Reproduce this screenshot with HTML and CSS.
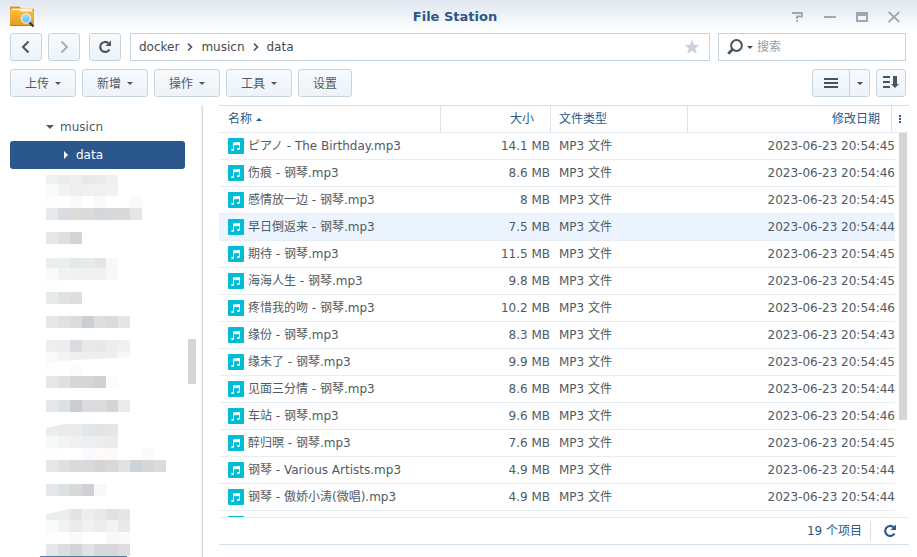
FILE: index.html
```html
<!DOCTYPE html>
<html lang="zh-CN">
<head>
<meta charset="utf-8">
<meta name="viewport" content="width=device-width, initial-scale=1">
<title>File Station</title>
<link rel="stylesheet" href="styles.css">
</head>
<body>
<div class="window">
  <header class="titlebar">
    <svg class="app-icon" viewBox="0 0 26 22" aria-hidden="true">
      <defs>
        <linearGradient id="folder" x1="0" y1="0" x2="0" y2="1"><stop offset="0" stop-color="#fdbd3c"/><stop offset="1" stop-color="#e39a1e"/></linearGradient>
        <linearGradient id="lens" x1="0" y1="0" x2="0" y2="1"><stop offset="0" stop-color="#a5e4fb"/><stop offset="1" stop-color="#5cc3f2"/></linearGradient>
      </defs>
      <path d="M0 19V1.500Q0 .5 1 .5H9L12 2.500H23Q24 2.500 24 3.500V19Z" fill="#dc9320"/>
      <rect x="1.500" y="2.500" width="21" height="4" fill="#fff4dc"/>
      <path d="M0 4H9L11 5.500H24V19Q24 20 23 20H1Q0 20 0 19Z" fill="url(#folder)"/>
      <path d="M0 19.500H24" stroke="#c87f14"/>
      <path d="M19 16L23.500 20.500" stroke="#39434d" stroke-width="2.400"/>
      <circle cx="16" cy="12.500" r="4.600" fill="url(#lens)" stroke="#e9edf0" stroke-width="1.300"/>
    </svg>
    <h1 class="title">File Station</h1>
    <div class="controls">
      <button class="control" aria-label="帮助"><svg viewBox="0 0 12 12"><path d="M0 2H10V5.500H5V8M5 9V11" fill="none" stroke="currentColor" stroke-width="1.800"/></svg></button>
      <button class="control" aria-label="最小化"><svg viewBox="0 0 12 12"><path d="M0 6H12" stroke="currentColor" stroke-width="2"/></svg></button>
      <button class="control" aria-label="最大化"><svg viewBox="0 0 12 12"><path d="M0 1H12V11H0ZM2 5V9H10V5Z" fill="currentColor" fill-rule="evenodd"/></svg></button>
      <button class="control" aria-label="关闭"><svg viewBox="0 0 12 12"><path d="M.5 1L11.500 11M11.500 1L.5 11" stroke="currentColor" stroke-width="1.800"/></svg></button>
    </div>
  </header>

  <div class="bar nav">
    <div class="history">
      <button class="btn square" aria-label="后退"><svg class="i14" viewBox="0 0 14 14"><path d="M9.500 1.500L4 7L9.500 12.500" fill="none" stroke="#4a545e" stroke-width="2"/></svg></button>
      <button class="btn square" aria-label="前进"><svg class="i14" viewBox="0 0 14 14"><path d="M4.500 1.500L10 7L4.500 12.500" fill="none" stroke="#a3abb3" stroke-width="1.800"/></svg></button>
    </div>
    <button class="btn square" aria-label="刷新"><svg class="i14" viewBox="0 0 14 14"><path d="M11.500 9.500A5 5 0 1 1 10.500 3.200" fill="none" stroke="#4a545e" stroke-width="2.200"/><path d="M13 .5V6H7.500Z" fill="#4a545e"/></svg></button>
    <div class="fields">
      <nav class="path" aria-label="路径">
        <a href="#docker">docker</a>
        <svg class="sep" viewBox="0 0 8 10"><path d="M2 1.500L5.500 5L2 8.500" fill="none" stroke="#4a545e" stroke-width="1.600"/></svg>
        <a href="#musicn">musicn</a>
        <svg class="sep" viewBox="0 0 8 10"><path d="M2 1.500L5.500 5L2 8.500" fill="none" stroke="#4a545e" stroke-width="1.600"/></svg>
        <a href="#data">data</a>
        <button class="star" aria-label="收藏"><svg viewBox="0 0 16 16"><path d="M8 .5L10 6H15.500L11.200 9.500L12.800 15L8 11.700L3.200 15L4.800 9.500L.5 6H6Z" fill="#c6d1dd"/></svg></button>
      </nav>
      <label class="search">
        <svg class="glass" viewBox="0 0 16 16"><circle cx="9.500" cy="6.500" r="5.400" fill="none" stroke="#4a545e" stroke-width="2"/><path d="M5.700 10.300L1.200 14.800" stroke="#4a545e" stroke-width="2.800"/></svg>
        <svg class="caret" viewBox="0 0 6 3"><path d="M0 0H6L3 3Z" fill="#414b55"/></svg>
        <input type="text" placeholder="搜索" aria-label="搜索">
      </label>
    </div>
  </div>

  <div class="bar tools">
    <button class="btn menu">上传<svg class="caret" viewBox="0 0 6 3"><path d="M0 0H6L3 3Z" fill="currentColor"/></svg></button>
    <button class="btn menu">新增<svg class="caret" viewBox="0 0 6 3"><path d="M0 0H6L3 3Z" fill="currentColor"/></svg></button>
    <button class="btn menu">操作<svg class="caret" viewBox="0 0 6 3"><path d="M0 0H6L3 3Z" fill="currentColor"/></svg></button>
    <button class="btn menu">工具<svg class="caret" viewBox="0 0 6 3"><path d="M0 0H6L3 3Z" fill="currentColor"/></svg></button>
    <button class="btn plain">设置</button>
    <div class="split">
      <button class="btn view" aria-label="列表视图"><svg class="i14" viewBox="0 0 14 14"><path d="M0 3H14M0 7H14M0 11H14" stroke="#4a545e" stroke-width="2"/></svg></button>
      <button class="btn more" aria-label="视图选项"><svg class="caret" viewBox="0 0 6 3"><path d="M0 0H6L3 3Z" fill="#414b55"/></svg></button>
    </div>
    <button class="btn sort" aria-label="排序"><svg viewBox="0 0 16 14"><path d="M0 1H7M0 6H7M0 11H7" stroke="#4a545e" stroke-width="2"/><path d="M10 0H14V8H16L12 12L8 8H10Z" fill="#4a545e"/></svg></button>
  </div>

  <div class="content">
    <aside class="sidebar">
      <div class="tree">
        <a class="node" href="#musicn"><svg viewBox="0 0 8 8"><path d="M0 2H8L4 6Z" fill="currentColor"/></svg>musicn</a>
        <a class="node selected" href="#data"><svg viewBox="0 0 8 8"><path d="M2 0V8L6 4Z" fill="currentColor"/></svg>data</a>
        <svg class="mosaic" id="mosaic" viewBox="0 0 175 388" width="175" height="388" aria-hidden="true"></svg>
      </div>
      <div class="thumb side-thumb"></div>
    </aside>

    <main class="files">
      <div class="list">
        <table>
          <colgroup><col class="c-name"><col class="c-size"><col class="c-type"><col><col class="c-edge"><col class="c-menu"></colgroup>
          <thead>
            <tr>
              <th>名称<svg class="up" viewBox="0 0 6 3"><path d="M0 3H6L3 0Z" fill="currentColor"/></svg></th>
              <th class="num">大小</th>
              <th>文件类型</th>
              <th class="date">修改日期</th>
              <th class="options" colspan="2"><svg viewBox="0 0 2 8"><path d="M0 0H2V2H0ZM0 3H2V5H0ZM0 6H2V8H0Z" fill="currentColor"/></svg></th>
            </tr>
          </thead>
          <tbody id="rows"></tbody>
        </table>
        <div class="thumb list-thumb"></div>
      </div>
      <footer class="status">
        <span>19 个项目</span>
        <button class="reload" aria-label="刷新"><svg class="i14" viewBox="0 0 14 14"><path d="M11.500 9.500A5 5 0 1 1 10.500 3.200" fill="none" stroke="#2a588c" stroke-width="2.200"/><path d="M13 .5V6H7.500Z" fill="#2a588c"/></svg></button>
      </footer>
    </main>
  </div>
</div>
<script src="app.js"></script>
</body>
</html>
```
FILE: styles.css
```css
* { box-sizing: border-box; }

body {
  margin: 0;
  background: #fff;
  color: #505a64;
  font: 12px/16px "DejaVu Sans", "Noto Sans CJK SC", sans-serif;
}

button, input {
  margin: 0;
  padding: 0;
  border: 0;
  background: none;
  color: inherit;
  font: inherit;
}

a { color: inherit; text-decoration: none; }
svg { display: block; flex: none; }

.window {
  display: flex;
  flex-direction: column;
  height: 100vh;
  overflow: hidden;
  background: linear-gradient(#e0e7f0, #fff 32px);
}

.titlebar {
  display: grid;
  grid-template-columns: 1fr auto 1fr;
  align-items: center;
  height: 33px;
  padding: 0 17px 0 10px;
  flex: none;
}
.app-icon { width: 26px; height: 22px; }
.title { margin: 0; font-size: 13px; color: #2a588c; }
.controls { display: flex; justify-content: flex-end; gap: 20px; }
.control { color: #a0a7ae; }
.control svg { width: 12px; height: 12px; }

.bar { display: flex; flex: none; height: 28px; padding: 0 11px 0 10px; }
.nav { gap: 9px; }
.history { display: flex; gap: 6px; }
.fields { display: flex; flex: 1; gap: 8px; min-width: 0; }
.tools { gap: 6px; margin-top: 8px; }

.btn {
  display: flex;
  align-items: center;
  justify-content: center;
  border: 1px solid #c6d4e0;
  border-radius: 3px;
  background: linear-gradient(#f7fafd, #edf3f8);
}
.square { width: 32px; }
.i14 { width: 14px; height: 14px; }
.menu { width: 66px; gap: 6px; padding-top: 1px; }
.plain { width: 54px; padding-top: 1px; }
.caret { width: 6px; height: 3px; }
.split { display: flex; margin-left: auto; }
.view { width: 38px; padding-right: 1px; border-radius: 3px 0 0 3px; }
.more { width: 21px; margin-left: -1px; border-radius: 0 3px 3px 0; }
.sort { width: 30px; }
.sort svg { width: 16px; height: 14px; }

.path {
  display: flex;
  flex: 1;
  align-items: center;
  gap: 7px;
  padding: 0 9px 0 8px;
  border: 1px solid #c6d4e0;
  background: #fff;
  color: #414b55;
}
.sep { width: 8px; height: 10px; }
.star { margin-left: auto; }
.star svg { width: 16px; height: 16px; }

.search {
  display: flex;
  align-items: center;
  width: 188px;
  gap: 4px;
  padding: 0 8px;
  border: 1px solid #c6d4e0;
  background: #fff;
}
.glass { width: 16px; height: 16px; }
.search input { flex: 1; min-width: 0; outline: 0; }
.search input::placeholder { color: #96a0aa; opacity: 1; }

.content { display: flex; flex: 1; min-height: 0; margin-top: 8px; }

.sidebar {
  position: relative;
  flex: none;
  width: 203px;
  overflow: hidden;
  border-right: 1px solid #d9dcdf;
  box-shadow: inset -2px 0 1px -1px #eceeef;
}
.tree { padding: 8px 17px 0 10px; }
.node {
  display: flex;
  align-items: center;
  gap: 6px;
  height: 28px;
  padding-left: 36px;
}
.selected {
  padding-left: 52px;
  border-radius: 3px;
  background: #2a588c;
  color: #fff;
}
.node svg { width: 8px; height: 8px; }

.thumb { position: absolute; width: 8px; background: #d3d5d7; }
.side-thumb { right: 6px; top: 60%; height: 45px; margin-top: -37px; }
.list-thumb { right: 2px; top: 27px; height: 287px; }

.files { flex: 1; min-width: 0; margin: 0 8px 12px 16px; display: flex; flex-direction: column; }
.list {
  position: relative;
  flex: 1;
  min-height: 0;
  overflow: hidden;
  border-top: 1px solid #d3dfea;
}
table { width: 100%; table-layout: fixed; border-collapse: separate; border-spacing: 0; }
.c-name { width: 222px; }
.c-size { width: 110px; }
.c-type { width: 137px; }
.c-edge { width: 3px; }
.c-menu { width: 14px; }

th, td {
  height: 27px;
  padding: 0 8px;
  border-bottom: 1px solid #e6edf3;
  text-align: left;
  white-space: nowrap;
}
th {
  border-right: 1px solid #d9e4ee;
  color: #2a588c;
  font-weight: normal;
}
th:first-child, td:first-child { padding-left: 9px; }
th.options { padding: 0 7px; border-right: 0; }
th.num { padding-right: 16px; }
th.date { padding-right: 11px; }
.num, .date { text-align: right; }
td.num { padding-right: 1px; }
td.date { padding-right: 0; }
td.rest { border: 0; }
.up { display: inline-block; width: 6px; height: 3px; margin-left: 4px; vertical-align: middle; }
.options svg { width: 2px; height: 8px; }
.name { display: flex; align-items: center; gap: 4px; }
.name svg { width: 16px; height: 16px; }
.hover td:not(.rest) { background: #ecf5ff; }

.status {
  display: flex;
  align-items: center;
  justify-content: flex-end;
  flex: none;
  height: 28px;
  gap: 8px;
  padding-right: 12px;
  border-top: 1px solid #e6ebef;
  border-bottom: 1px solid #d3dfea;
  color: #2a588c;
}
.reload { height: 20px; padding-left: 12px; border-left: 1px solid #d3dfea; }
```
FILE: app.js
```js
const files = [
  ["ピアノ - The Birthday", "14.1", "45"],
  ["伤痕 - 钢琴", "8.6", "46"],
  ["感情放一边 - 钢琴", "8", "45"],
  ["早日倒返来 - 钢琴", "7.5", "44"],
  ["期待 - 钢琴", "11.5", "45"],
  ["海海人生 - 钢琴", "9.8", "45"],
  ["疼惜我的吻 - 钢琴", "10.2", "46"],
  ["缘份 - 钢琴", "8.3", "43"],
  ["缘末了 - 钢琴", "9.9", "45"],
  ["见面三分情 - 钢琴", "8.6", "44"],
  ["车站 - 钢琴", "9.6", "46"],
  ["醉归暝 - 钢琴", "7.6", "45"],
  ["钢琴 - Various Artists", "4.9", "44"],
  ["钢琴 - 傲娇小涛(微唱)", "4.9", "44"],
  null
];

const icon = '<svg viewBox="0 0 16 16"><rect width="16" height="16" rx="1" fill="#00bcd4"/>' +
  '<path d="M5 4.500L12 4V11H11V7L6 7.300V12H5Z" fill="#fff"/>' +
  '<ellipse cx="4.600" cy="12" rx="1.500" ry="1.100" fill="#fff"/><ellipse cx="10.400" cy="11" rx="1.500" ry="1.100" fill="#fff"/></svg>';

document.getElementById("rows").innerHTML = files.map((f, i) => {
  const cells = f
    ? [f[0] + ".mp3", f[1] + " MB", "MP3 文件", "2023-06-23 20:54:" + f[2]]
    : ["", "", "", ""];
  return `<tr class="${i === 3 ? "hover" : ""}"><td><div class="name">${icon}<span>${cells[0]}</span></div></td>` +
    `<td class="num">${cells[1]}</td><td>${cells[2]}</td><td class="date" colspan="2">${cells[3]}</td><td class="rest"></td></tr>`;
}).join("");

// Obscured folder names: [top, height, one colour per 12px cell]
const mosaic = [
  [6, 9, "eef0f2 ebecee f0efee e8e8e9 e9eaeb eef1f0"],
  [15, 12, "f7faf9 f0f3f6 eeeeee f0f0ef eff0f0 f1f1f1"],
  [27, 12, "fdfdfd ffffff f9f9f9 ffffff f7faf9 ffffff ffffff f9f9f9"],
  [39, 12, "e7e9ea d8dde1 dcdcda d9dbda d3d8d9 d7d9dc d9d9d7 e6e6e6"],
  [63, 12, "e5e7e9 dae0e4 d4d4d3"],
  [89, 10, "eceeee ecefef e3e8e9 e8e9e9 e3e5e7 f8f8f6"],
  [99, 12, "f7faf9 f0f3f6 f1f1f1 eff0f1 eff1f1 f8f8f6"],
  [111, 12, "fdfdfd"],
  [123, 12, "e7e9ea dde2e3 dededc"],
  [147, 12, "e5e7e9 dde2e3 dddcda cacfd3 dfdedc d9dadd e7e6e5"],
  [171, 12, "eceef0 ebedef dadcdf e9eae7 e7e9e8 eceeed f0f0ee"],
  [183, 12, "f7faf9 f2f4f4 eeeeee eeeeee eeeeee edefee f7f7f7"],
  [196, 11, "fdfdfd ffffff fcfcfc"],
  [207, 12, "e5e7e9 dbe1e5 d6d6d7 d6d6d6 cfd2d5 fefcfa"],
  [231, 12, "e5e7e9 dbe1e5 cccdcf dadcdf dbdddd d5d5d5 eaecec"],
  [255, 12, "ecedef eaecec ebebea e1e6ea e5e4e2 e6e6e6"],
  [267, 12, "f6f9f8 f2f4f4 f1f0ee eceff2 eeedee ebebeb"],
  [279, 12, "fdfdfd ffffff ffffff f8fafd fdfaf8 fafafa ffffff ffffff fafafa"],
  [291, 12, "e5e7e9 dbe1e5 dbdad8 d6dbe0 d7d4d2 d8d8d9 e0e2e4 ced3d7 d7d7d8 d9dcdb"],
  [315, 12, "e5e7e9 dbe1e4 d8dad9 d0d1d5 faf8f6"],
  [340, 11, "ecedef eaedec e3e5e4 ecefee e9e9ea dee2e1 e6e6e6"],
  [351, 12, "f6faf9 f0f2f5 eaeaeb f0f2f1 ececec f2f3f3 e8eae9"],
  [363, 12, "fdfdfd ffffff fafafa ffffff ffffff f8f8f8 fafafa"],
  [375, 12, "e5e7e9 dadee2 d3d4d5 dfe2e1 d6d9d7 d6d8d7 dddddd"]
];

document.getElementById("mosaic").innerHTML = mosaic.map(([y, h, colours]) =>
  colours.split(" ").map((c, i) =>
    `<rect x="${36 + i * 12}" y="${y}" width="12" height="${h}" fill="#${c}"/>`).join("")
).join("") +
  '<path d="M36 195L50 192L120 188V196H36Z M36 255H54L36 259Z M36 340H60L36 345Z" fill="#fff"/>' +
  '<path d="M30 387H117V388H30Z" fill="#5a76a5"/>';
```
